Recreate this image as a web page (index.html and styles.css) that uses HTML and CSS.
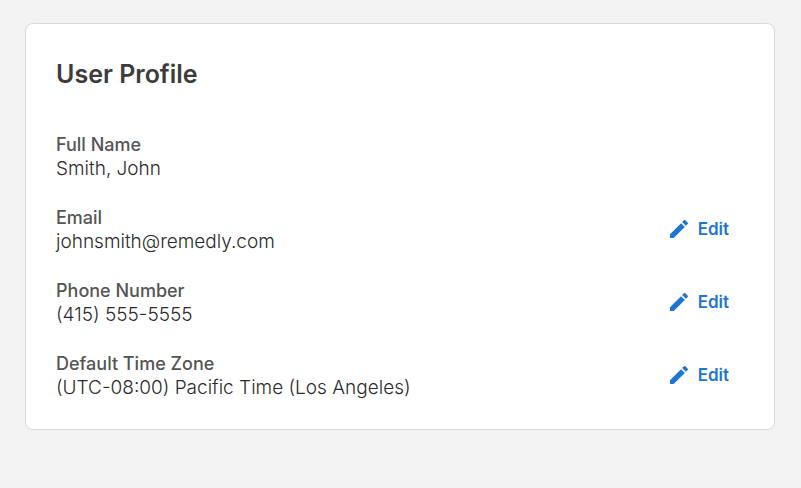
FILE: index.html
```html
<!DOCTYPE html>
<html lang="en">
<head>
    <meta charset="UTF-8">
    <title>User Profile</title>
    <link rel="stylesheet" href="styles.css">
</head>
<body>
<svg class="sprite" width="0" height="0">
    <symbol id="pencil" viewBox="3 3 18 18">
        <path d="M3 17.25V21h3.75L17.81 9.94l-3.75-3.75L3 17.25zM20.71 7.04c.39-.39.39-1.02 0-1.41l-2.34-2.34c-.39-.39-1.02-.39-1.41 0l-1.83 1.83 3.75 3.75 1.83-1.83z"/>
    </symbol>
</svg>
<main class="card">
    <h1>User Profile</h1>
    <dl class="fields">
        <div class="row">
            <div>
                <dt>Full Name</dt>
                <dd>Smith, John</dd>
            </div>
        </div>
        <div class="row">
            <div>
                <dt>Email</dt>
                <dd>johnsmith@remedly.com</dd>
            </div>
            <button type="button" class="edit"><svg><use href="#pencil"/></svg>Edit</button>
        </div>
        <div class="row">
            <div>
                <dt>Phone Number</dt>
                <dd>(415) 555-5555</dd>
            </div>
            <button type="button" class="edit"><svg><use href="#pencil"/></svg>Edit</button>
        </div>
        <div class="row">
            <div>
                <dt>Default Time Zone</dt>
                <dd>(UTC-08:00) Pacific Time (Los Angeles)</dd>
            </div>
            <button type="button" class="edit"><svg><use href="#pencil"/></svg>Edit</button>
        </div>
    </dl>
</main>
</body>
</html>
```
FILE: styles.css
```css
* {
    box-sizing: border-box;
    margin: 0;
    padding: 0;
}

body {
    padding: 23px 26px 23px 25px;
    background-color: #f3f3f3;
    font-family: Inter, "Liberation Sans", sans-serif;
    color: #3c3c3c;
}

.sprite {
    position: absolute;
}

.card {
    padding: 34px 30px 29px;
    background-color: #fff;
    border: 1px solid #d9d9d9;
    border-radius: 8px;
}

h1 {
    margin-bottom: 43px;
    font-size: 25px;
    font-weight: 600;
    line-height: 32px;
}

.fields {
    display: grid;
    gap: 25px;
}

.row {
    display: flex;
    justify-content: space-between;
    align-items: center;
}

dt {
    font-size: 18px;
    font-weight: 500;
    line-height: 24px;
    color: #555;
}

dd {
    font-size: 19px;
    font-weight: 300;
    line-height: 24px;
    color: #2b2b2b;
}

.edit {
    display: flex;
    align-items: center;
    gap: 10px;
    padding: 0 15px 2px;
    border: none;
    background: none;
    font: 600 17px/24px Inter, "Liberation Sans", sans-serif;
    color: #1f76d2;
    cursor: pointer;
}

.edit svg {
    width: 18px;
    height: 18px;
    fill: currentColor;
}
```
